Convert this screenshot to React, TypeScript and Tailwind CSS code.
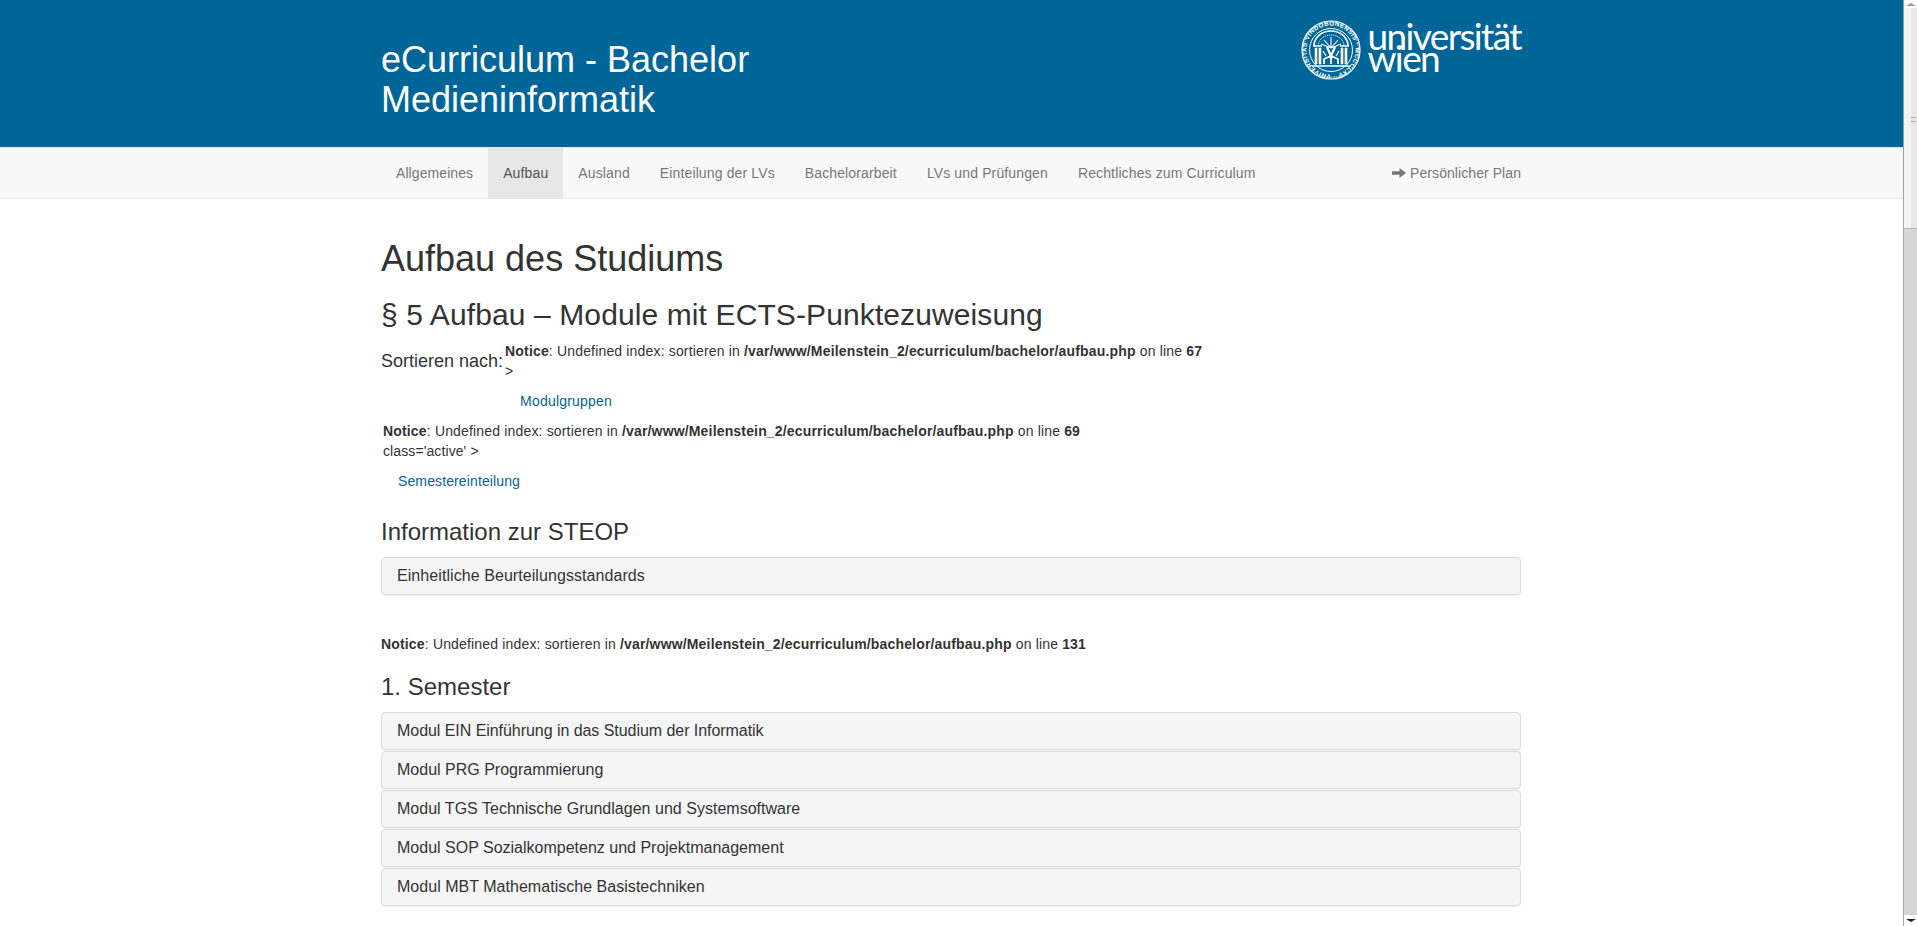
import { Fragment } from 'react';

function Seal() {
  return (
    <svg viewBox="0 0 60 60" className="h-[60px] w-[60px] shrink-0" fill="none" stroke="white">
      <defs>
        <path id="seal-ring" d="M30 54.5a24.5 24.5 0 1 1 0-49a24.5 24.5 0 1 1 0 49" />
      </defs>
      <circle cx="30" cy="30" r="29" strokeWidth="1.2" />
      <circle cx="30" cy="30" r="27.4" strokeWidth="0.8" strokeDasharray="1.4 1.2" />
      <circle cx="30" cy="30" r="21.5" strokeWidth="1" />
      <text fill="white" stroke="none" fontFamily="'Liberation Sans', sans-serif" fontSize="6.2" fontWeight="700" letterSpacing="0.45">
        <textPath href="#seal-ring">VNIVERSITAS VINDOBONENSIS · MCCCLXV ·</textPath>
      </text>
      <path d="M13 26a17 15 0 0 1 34 0" strokeWidth="1.6" />
      <path d="M17 26a13 11 0 0 1 26 0" strokeWidth="1" strokeDasharray="1.2 0.9" />
      <path d="M30 28V17M30 28l-7-8M30 28l7-8M30 28l-10-4M30 28l10-4" strokeWidth="1.1" />
      <path d="M12 26h9M39 26h9M11 46h38" strokeWidth="1.6" />
      <path d="M14 28h2v16h-2zM18 28h2v16h-2zM40 28h2v16h-2zM44 28h2v16h-2z" fill="white" strokeWidth="0.6" />
      <path d="M26 27l4 9 4-9" strokeWidth="2.2" />
      <path d="M23 44v-5l7-3 7 3v5M30 36v8" strokeWidth="1.8" />
      <path d="M22 31l3 5M38 31l-3 5" strokeWidth="1.2" />
    </svg>
  );
}

function Logo() {
  return (
    <div className="flex items-start gap-[6px]">
      <Seal />
      <div className="pt-[5px] font-['Lato',sans-serif] text-[37px] font-normal leading-[22px] tracking-[-1.6px] text-white">
        <div>universität</div>
        <div>wien</div>
      </div>
    </div>
  );
}

const navItems = ['Allgemeines', 'Aufbau', 'Ausland', 'Einteilung der LVs', 'Bachelorarbeit', 'LVs und Prüfungen', 'Rechtliches zum Curriculum'];

function Navbar() {
  return (
    <nav className="h-[52px] border-y border-[#e7e7e7] bg-[#f8f8f8]">
      <div className="ml-[381px] flex w-[1140px] justify-between">
        <ul className="flex">
          {navItems.map((item) => (
            <li
              key={item}
              className={
                item === 'Aufbau'
                  ? 'bg-[#e7e7e7] px-[15px] py-[15px] leading-5 tracking-[0.13px] text-[#555]'
                  : item === 'Allgemeines'
                    ? 'px-[15px] py-[15px] leading-5 tracking-[0.08px] text-[#777]'
                    : 'px-[15px] py-[15px] leading-5 tracking-[0.13px] text-[#777]'
              }
            >
              {item}
            </li>
          ))}
        </ul>
        <div className="flex items-center gap-[4px] tracking-[0.07px] text-[#777]">
          <svg viewBox="0 0 14 12" className="h-[12px] w-[14px]" fill="#777">
            <path d="M0 4.2h7.5V1L14 6l-6.5 5V7.8H0z" />
          </svg>
          Persönlicher Plan
        </div>
      </div>
    </nav>
  );
}

function Notice({ line }: { line: number }) {
  return (
    <Fragment>
      <b>Notice</b>: Undefined index: sortieren in <b>/var/www/Meilenstein_2/ecurriculum/bachelor/aufbau.php</b> on line <b>{line}</b>
    </Fragment>
  );
}

function Panel({ title, tracking = '' }: { title: string; tracking?: string }) {
  return (
    <div className={`rounded-[4px] border border-[#ddd] bg-[#f5f5f5] px-[15px] py-[10px] text-base leading-4 text-[#333] shadow-[0_1px_1px_rgba(0,0,0,0.05)] ${tracking}`}>
      {title}
    </div>
  );
}

function Scrollbar() {
  return (
    <div className="flex h-full w-[14px] shrink-0 flex-col border-l border-[#a0a0a0] bg-[#d6d6d6]">
      <div className="flex h-[8px] items-center justify-center bg-white">
        <div className="h-0 w-0 border-x-[5px] border-b-[3px] border-x-transparent border-b-[#999]" />
      </div>
      <div className="flex h-[221px] border-b border-[#b5b5b5] bg-[#e8e8e8]">
        <div className="w-[7px] bg-[#f3f3f3]" />
        <div className="mt-[109px] h-[5px] w-[5px] border-y border-[#aaa]" />
      </div>
      <div className="flex-1" />
      <div className="flex h-[11px] items-center justify-center bg-white">
        <div className="h-0 w-0 border-x-[5px] border-t-[3px] border-x-transparent border-t-[#222]" />
      </div>
    </div>
  );
}

export default function App() {
  return (
    <div className="flex h-[926px] overflow-hidden bg-white font-['Liberation_Sans',sans-serif] text-sm leading-5 text-[#333]">
      <div className="min-w-0 flex-1">
        <header className="h-[147px] bg-[#006699]">
          <div className="ml-[381px] flex w-[1140px] justify-between">
            <h1 className="mt-[40px] w-[420px] text-4xl leading-[39.6px] text-white">eCurriculum - Bachelor Medieninformatik</h1>
            <div className="mt-[20px]">
              <Logo />
            </div>
          </div>
        </header>
        <Navbar />
        <main className="ml-[381px] w-[1140px]">
          <h1 className="mt-[40px] text-4xl leading-[39.6px]">Aufbau des Studiums</h1>
          <h2 className="mt-[19px] text-3xl leading-[33px] tracking-[0.11px]">§ 5 Aufbau – Module mit ECTS-Punktezuweisung</h2>
          <div className="mt-[10px] flex gap-[2px]">
            <div className="mt-[10px] text-lg leading-[20px]">Sortieren nach:</div>
            <div>
              <div className="tracking-[0.165px]">
                <Notice line={67} />
              </div>
              <div>&gt;</div>
              <div className="px-[15px] py-[10px] tracking-[0.2px] text-[#006699]">Modulgruppen</div>
            </div>
          </div>
          <div className="pl-[2px]">
            <div className="tracking-[0.165px]">
              <Notice line={69} />
            </div>
            <div className="tracking-[0.1px]">class='active' &gt;</div>
            <div className="px-[15px] py-[10px] tracking-[0.12px] text-[#006699]">Semestereinteilung</div>
          </div>
          <h3 className="mt-[18px] text-2xl leading-[26.4px]">Information zur STEOP</h3>
          <div className="mt-[12px]">
            <Panel title="Einheitliche Beurteilungsstandards" tracking="tracking-[0.07px]" />
          </div>
          <p className="mt-[39px] tracking-[0.165px]">
            <Notice line={131} />
          </p>
          <h3 className="mt-[20px] text-2xl leading-[26.4px]">1. Semester</h3>
          <div className="mt-[12px] flex flex-col gap-[1px]">
            <Panel title="Modul EIN Einführung in das Studium der Informatik" tracking="tracking-[-0.05px]" />
            <Panel title="Modul PRG Programmierung" />
            <Panel title="Modul TGS Technische Grundlagen und Systemsoftware" tracking="tracking-[0.02px]" />
            <Panel title="Modul SOP Sozialkompetenz und Projektmanagement" />
            <Panel title="Modul MBT Mathematische Basistechniken" tracking="tracking-[0.03px]" />
          </div>
        </main>
      </div>
      <Scrollbar />
    </div>
  );
}
